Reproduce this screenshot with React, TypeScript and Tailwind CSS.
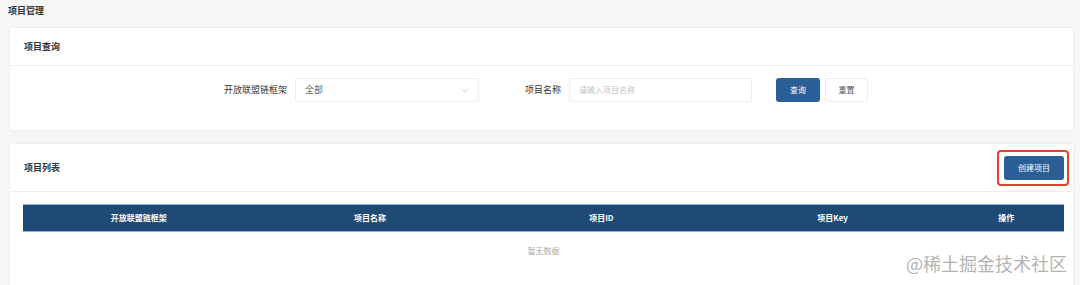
import React from "react";

export default function App() {
  const cols = ["开放联盟链框架", "项目名称", "项目ID", "项目Key", "操作"];
  return (
    <div
      className="relative w-[1080px] h-[285px] overflow-hidden bg-[#f6f6f6] text-[#333]"
      style={{ fontFamily: '"Noto Sans CJK SC", "Noto Sans", sans-serif' }}
    >
      <div className="pl-[8px] pt-[3px] h-[27px] text-[9px] font-bold leading-[16px]">项目管理</div>

      {/* query card */}
      <div className="ml-[9px] w-[1065px] bg-white border border-[#efefef] rounded-[3px]">
        <div className="h-[38px] flex items-center pl-[14px] text-[9px] font-bold border-b border-[#ececec]">
          项目查询
        </div>
        <div className="flex items-center pt-[12px] pb-[28px]">
          <div className="w-[285px] text-right pr-[8px] text-[9px]">开放联盟链框架</div>
          <div className="w-[184px] h-[24px] border border-[#eeeeee] rounded-[2px] flex items-center justify-between px-[9px] text-[9px] text-[#666]">
            <span>全部</span>
            <svg width="8" height="5" viewBox="0 0 8 5" fill="none">
              <path d="M0.5 0.5 L4 4 L7.5 0.5" stroke="#c8c8c8" strokeWidth="0.9" />
            </svg>
          </div>
          <div className="ml-[46px] text-[9px]">项目名称</div>
          <div className="ml-[8px] w-[183px] h-[24px] border border-[#eeeeee] rounded-[2px] flex items-center px-[9px] text-[8px] text-[#c4c4c4]">
            请输入项目名称
          </div>
          <button className="ml-[24px] w-[44px] h-[24px] rounded-[3px] bg-[#2a5e97] text-white text-[8px] flex items-center justify-center">
            查询
          </button>
          <button className="ml-[5px] w-[43px] h-[24px] rounded-[3px] bg-white border border-[#ececec] text-[#555] text-[8px] flex items-center justify-center">
            重置
          </button>
        </div>
      </div>

      {/* list card */}
      <div className="mt-[12px] ml-[9px] w-[1065px] h-[160px] bg-white border border-[#efefef] rounded-[3px]">
        <div className="h-[48px] flex items-center justify-between pl-[14px] pr-[4px] border-b border-[#ececec]">
          <span className="text-[9px] font-bold">项目列表</span>
          <div className="pl-[5px] pr-[3px] py-[4px] border-2 border-[#e2432f] rounded-[4px]">
            <button className="w-[60px] h-[24px] rounded-[3px] bg-[#2a5e97] text-white text-[8px] flex items-center justify-center">
              创建项目
            </button>
          </div>
        </div>
        <div className="pt-[12px] pl-[13px] pr-[9px]">
          <div className="grid grid-cols-[2fr_2fr_2fr_2fr_1fr] h-[28px] bg-[#1f4a75] border-y border-[#8fb4d4]">
            {cols.map((c) => (
              <div key={c} className="flex items-center justify-center text-white text-[8px] font-bold">
                {c}
              </div>
            ))}
          </div>
          <div className="h-[38px] flex items-center justify-center text-[8px] text-[#aaa]">暂无数据</div>
        </div>
      </div>

      <div className="absolute left-[906px] top-[251px] text-[18px] text-[#b4b4b4] leading-[24px]">@稀土掘金技术社区</div>
    </div>
  );
}
